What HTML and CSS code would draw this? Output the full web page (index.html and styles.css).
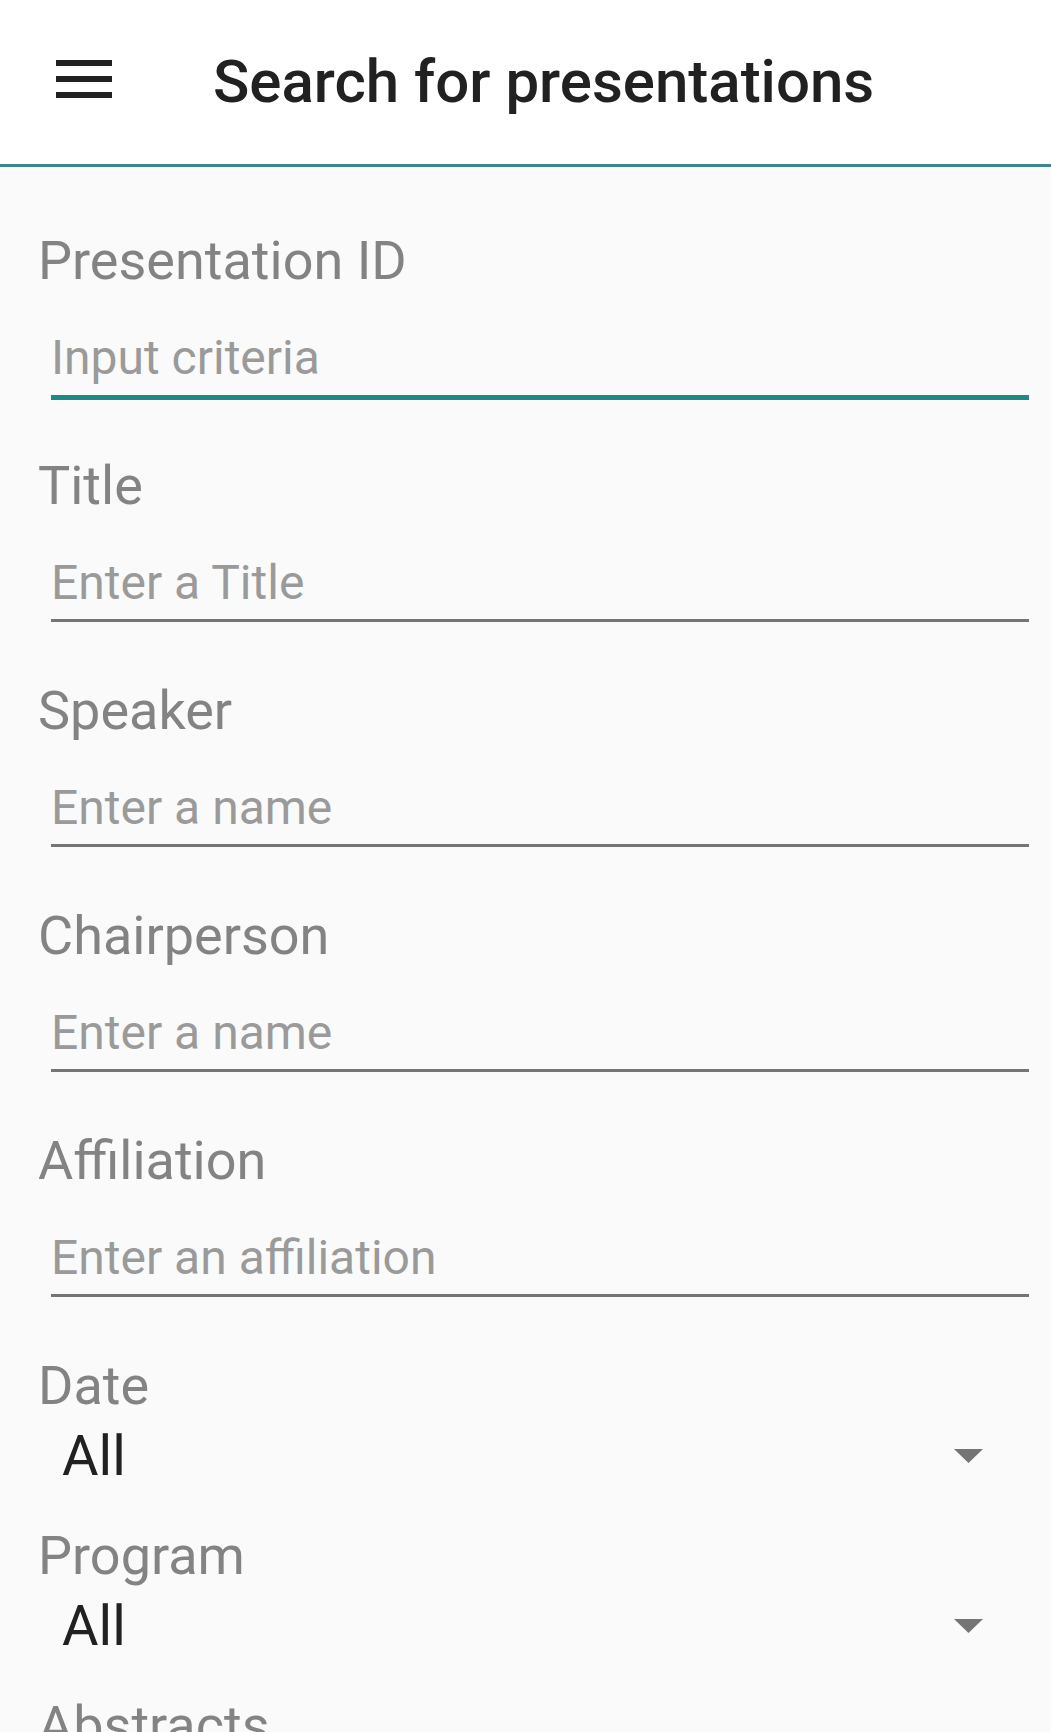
FILE: index.html
```html
<!DOCTYPE html>
<html lang="en">
<head>
    <meta charset="UTF-8">
    <meta name="viewport" content="width=device-width, initial-scale=1.0">
    <title>Search for presentations</title>
    <link rel="stylesheet" href="styles.css">
</head>
<body>
    <header class="app-bar">
        <div class="menu-icon">
            <span></span>
            <span></span>
            <span></span>
        </div>
        <h1 class="app-title">Search for presentations</h1>
    </header>

    <main class="search-form">
        <div class="field">
            <label for="pid">Presentation ID</label>
            <div class="input-wrap focused">
                <input type="text" id="pid" placeholder="Input criteria">
            </div>
        </div>

        <div class="field">
            <label for="title">Title</label>
            <div class="input-wrap">
                <input type="text" id="title" placeholder="Enter a Title">
            </div>
        </div>

        <div class="field">
            <label for="speaker">Speaker</label>
            <div class="input-wrap">
                <input type="text" id="speaker" placeholder="Enter a name">
            </div>
        </div>

        <div class="field">
            <label for="chair">Chairperson</label>
            <div class="input-wrap">
                <input type="text" id="chair" placeholder="Enter a name">
            </div>
        </div>

        <div class="field">
            <label for="affiliation">Affiliation</label>
            <div class="input-wrap">
                <input type="text" id="affiliation" placeholder="Enter an affiliation">
            </div>
        </div>

        <!-- Spinners -->
        <div class="spinner-field">
            <label>Date</label>
            <div class="spinner">
                <span class="spinner-value">All</span>
                <svg class="spinner-arrow" width="29" height="14" viewBox="0 0 29 14">
                    <polygon points="0,0 29,0 14.5,14" fill="#757575"/>
                </svg>
            </div>
        </div>

        <div class="spinner-field">
            <label>Program</label>
            <div class="spinner">
                <span class="spinner-value">All</span>
                <svg class="spinner-arrow" width="29" height="14" viewBox="0 0 29 14">
                    <polygon points="0,0 29,0 14.5,14" fill="#757575"/>
                </svg>
            </div>
        </div>

        <div class="spinner-field">
            <label>Abstracts</label>
        </div>
    </main>
</body>
</html>
```

FILE: styles.css
```css
* {
    box-sizing: border-box;
}
html, body {
    margin: 0;
    padding: 0;
}
body {
    font-family: Roboto, "Noto Sans", Arial, sans-serif;
    background: #fafafa;
    overflow: hidden;
}
.app-bar {
    display: flex;
    align-items: center;
    height: 167px;
    background: #ffffff;
    border-bottom: 3px solid #3a8796;
}
.menu-icon {
    align-self: flex-start;
    margin: 60px 0 0 56px;
    width: 56px;
}
.menu-icon span {
    display: block;
    height: 6px;
    background: #212121;
    margin-bottom: 10px;
}
.app-title {
    margin: 0 0 0 101px;
    font-size: 60px;
    font-weight: 500;
    line-height: 64px;
    color: #212121;
}
.search-form {
    padding: 62px 22px 0 38px;
}
.field {
    margin-bottom: 57px;
}
.field label,
.spinner-field label {
    display: block;
    font-size: 54px;
    line-height: 64px;
    height: 64px;
    color: #838383;
}
.field label {
    margin-bottom: 37px;
}
.input-wrap {
    margin-left: 13px;
    padding-bottom: 8px;
    border-bottom: 3px solid #757575;
}
.input-wrap.focused {
    padding-bottom: 9px;
    border-bottom: 5px solid #1e8a84;
    margin-bottom: -3px;
}
.input-wrap input {
    display: block;
    width: 100%;
    height: 56px;
    padding: 0;
    border: none;
    outline: none;
    background: transparent;
    font-family: inherit;
    font-size: 48px;
    line-height: 56px;
    color: #212121;
}
.input-wrap input::placeholder {
    color: #9a9a9a;
    opacity: 1;
}
.spinner-field {
    margin-bottom: 36px;
}
.spinner {
    display: flex;
    align-items: center;
    justify-content: space-between;
    height: 64px;
    margin-top: 6px;
    padding: 0 46px 0 24px;
}
.spinner-value {
    font-size: 56px;
    line-height: 64px;
    color: #212121;
}
.spinner-arrow {
    display: block;
}
```
